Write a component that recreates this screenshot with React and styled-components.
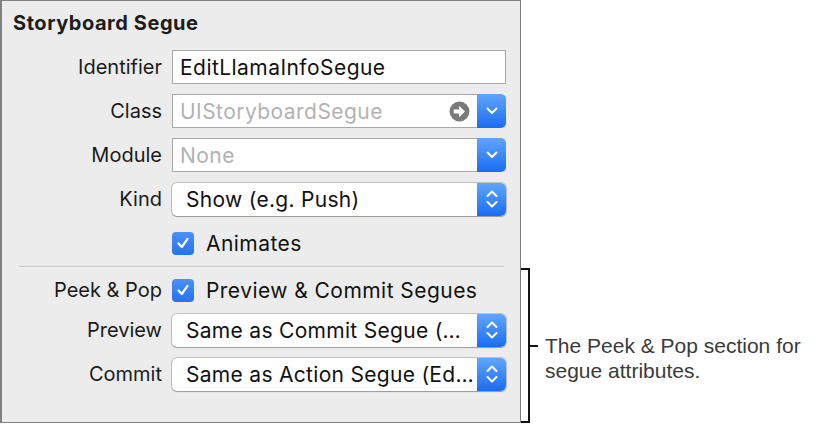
import React from 'react';
import styled, { createGlobalStyle } from 'styled-components';

const GlobalStyle = createGlobalStyle`
  html, body {
    margin: 0;
    padding: 0;
    background: #ffffff;
  }
  body {
    font-family: Inter, "Noto Sans", sans-serif;
  }
`;

const Page = styled.div`
  display: flex;
  align-items: flex-start;
  width: 829px;
  height: 428px;
  overflow: hidden;
`;

const Inspector = styled.section`
  box-sizing: border-box;
  flex: none;
  width: 521px;
  height: 423px;
  padding: 11px 15px 0 1px;
  background: #ececec;
  border: 1px solid #808080;
  border-left-width: 2px;
`;

const Title = styled.h2`
  margin: 0 0 0 10px;
  font: 700 20px/22px Inter, sans-serif;
  letter-spacing: 0.55px;
  color: #1c1c1c;
`;

const Form = styled.div`
  display: flex;
  flex-direction: column;
  margin-top: 16px;
`;

const Row = styled.div`
  display: grid;
  grid-template-columns: 159px 334px;
  column-gap: 10px;
  align-items: center;
  height: ${props => props.$height || 34}px;
  margin-top: ${props => props.$top || 0}px;
`;

const Label = styled.div`
  text-align: right;
  font-size: 20px;
  color: #1a1a1a;
  white-space: nowrap;
`;

const Combo = styled.div`
  display: flex;
  height: 34px;
`;

const TextField = styled.div`
  box-sizing: border-box;
  flex: 1;
  display: flex;
  align-items: center;
  height: 34px;
  padding: 0 7px;
  background: #ffffff;
  border: 1px solid #a9a9a9;
  border-right-width: ${props => props.$joined ? 0 : 1}px;
  font-size: 21px;
  letter-spacing: 0.45px;
  color: ${props => props.$placeholder ? '#b2b2b2' : '#111111'};
  white-space: nowrap;
  overflow: hidden;
`;

const FieldText = styled.span`
  flex: 1;
`;

const BlueButton = styled.div`
  flex: none;
  display: flex;
  align-items: center;
  justify-content: center;
  width: 29px;
  height: 100%;
  border-radius: 0 5px 5px 0;
  background: linear-gradient(#5fa6fd, #1b6cf4);
`;

const Popup = styled.div`
  display: flex;
  height: 33px;
  border-radius: 5px;
  background: #ffffff;
  box-shadow: 0 0 0 1px rgba(0, 0, 0, 0.18), 0 1px 1px rgba(0, 0, 0, 0.2);
  overflow: hidden;
`;

const PopupText = styled.div`
  flex: 1;
  display: flex;
  align-items: center;
  padding-left: 14px;
  font-size: 21px;
  letter-spacing: 0.3px;
  color: #111111;
  white-space: nowrap;
`;

const Check = styled.label`
  display: flex;
  align-items: center;
  gap: 12px;
  font-size: 21px;
  letter-spacing: 0.45px;
  color: #111111;
  white-space: nowrap;
`;

const Box = styled.span`
  display: flex;
  align-items: center;
  justify-content: center;
  width: 22px;
  height: 23px;
  border-radius: 4px;
  background: linear-gradient(#4a91fa, #2473f2);
`;

const Divider = styled.hr`
  height: 1px;
  margin: 9px 1px 0 16px;
  border: 0;
  background: #c3c3c3;
  box-shadow: 0 1px 0 #f7f7f7;
`;

const Callout = styled.div`
  display: flex;
  height: 155px;
  margin-top: 268px;
`;

const Bracket = styled.div`
  box-sizing: border-box;
  width: 9px;
  height: 100%;
  border: 2px solid #111111;
  border-left: 0;
`;

const Tick = styled.div`
  width: 8px;
  height: 2px;
  margin-top: 77px;
  background: #111111;
`;

const Note = styled.p`
  width: 270px;
  margin: 65px 0 0 7px;
  font: 21px/25px "Liberation Sans", Arial, sans-serif;
  color: #3a3a3a;
`;

const ChevronDown = () => (
  <svg width="12" height="8" viewBox="0 0 12 8">
    <path d="M1.5 1.5 L6 6 L10.5 1.5" fill="none" stroke="#fff" strokeWidth="2" strokeLinecap="round" strokeLinejoin="round" />
  </svg>
);

const ChevronUpDown = () => (
  <svg width="12" height="20" viewBox="0 0 12 20">
    <path d="M1.5 7 L6 2.5 L10.5 7 M1.5 13 L6 17.5 L10.5 13" fill="none" stroke="#fff" strokeWidth="2" strokeLinecap="round" strokeLinejoin="round" />
  </svg>
);

const CheckMark = () => (
  <svg width="14" height="14" viewBox="0 0 14 14">
    <path d="M2.5 7.5 L5.8 11 L11.5 2.8" fill="none" stroke="#fff" strokeWidth="2.2" strokeLinecap="round" strokeLinejoin="round" />
  </svg>
);

const GoArrow = () => (
  <svg width="21" height="21" viewBox="0 0 20 20">
    <circle cx="10" cy="10" r="9.5" fill="#7a7a7a" />
    <path d="M4.5 8.2 H9.6 V4.6 L15.2 10 L9.6 15.4 V11.8 H4.5 Z" fill="#fff" />
  </svg>
);

const FieldRow = ({ label, top, children }) => (
  <Row $top={top}>
    <Label>{label}</Label>
    {children}
  </Row>
);

const PopupButton = ({ value }) => (
  <Popup>
    <PopupText>{value}</PopupText>
    <BlueButton>
      <ChevronUpDown />
    </BlueButton>
  </Popup>
);

const CheckRow = ({ label, text, top }) => (
  <Row $top={top} $height={28}>
    <Label>{label}</Label>
    <Check>
      <Box>
        <CheckMark />
      </Box>
      {text}
    </Check>
  </Row>
);

export default function App() {
  return (
    <>
      <GlobalStyle />
      <Page>
        <Inspector>
          <Title>Storyboard Segue</Title>
          <Form>
            <FieldRow label="Identifier">
              <TextField>EditLlamaInfoSegue</TextField>
            </FieldRow>
            <FieldRow label="Class" top={10}>
              <Combo>
                <TextField $placeholder $joined>
                  <FieldText>UIStoryboardSegue</FieldText>
                  <GoArrow />
                </TextField>
                <BlueButton>
                  <ChevronDown />
                </BlueButton>
              </Combo>
            </FieldRow>
            <FieldRow label="Module" top={10}>
              <Combo>
                <TextField $placeholder $joined>None</TextField>
                <BlueButton>
                  <ChevronDown />
                </BlueButton>
              </Combo>
            </FieldRow>
            <FieldRow label="Kind" top={10}>
              <PopupButton value="Show (e.g. Push)" />
            </FieldRow>
            <CheckRow label="" text="Animates" top={13} />
            <Divider />
            <CheckRow label="Peek & Pop" text="Preview & Commit Segues" top={9} />
            <FieldRow label="Preview" top={9}>
              <PopupButton value="Same as Commit Segue (…" />
            </FieldRow>
            <FieldRow label="Commit" top={10}>
              <PopupButton value="Same as Action Segue (Ed…" />
            </FieldRow>
          </Form>
        </Inspector>
        <Callout>
          <Bracket />
          <Tick />
          <Note>The Peek &amp; Pop section for segue attributes.</Note>
        </Callout>
      </Page>
    </>
  );
}
